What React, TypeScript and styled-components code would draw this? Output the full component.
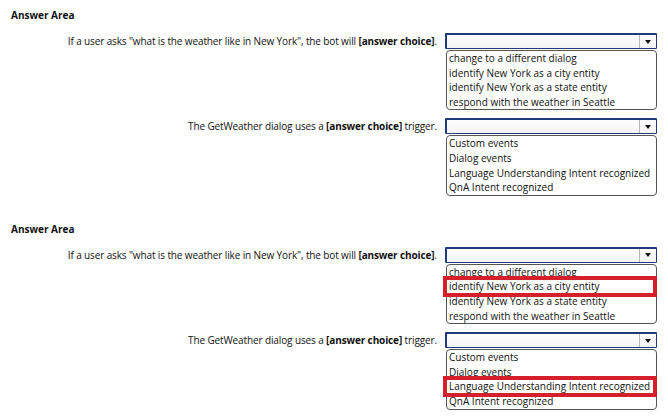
import React from "react";
import styled, { createGlobalStyle } from "styled-components";

const Global = createGlobalStyle`
  html, body { margin: 0; padding: 0; background: #ffffff; }
  body { font-family: "Open Sans", "Noto Sans", sans-serif; color: #111; }
`;

const Page = styled.div`
  width: 668px;
  height: 420px;
  padding: 8px 0 0 11px;
  box-sizing: border-box;
  overflow: hidden;
  display: flex;
  flex-direction: column;
`;

const Block = styled.section<{ $top?: number }>`
  display: flex;
  flex-direction: column;
  margin-top: ${(p) => p.$top ?? 0}px;
`;

const Heading = styled.div`
  font-weight: 700;
  font-size: 10px;
  line-height: 14px;
  margin-bottom: 11px;
`;

const Row = styled.div<{ $gap?: number }>`
  display: grid;
  grid-template-columns: 426px 212px;
  column-gap: 8px;
  align-items: start;
  margin-bottom: ${(p) => p.$gap ?? 0}px;
`;

const Label = styled.div`
  text-align: right;
  font-size: 10px;
  line-height: 16px;
  letter-spacing: -0.12px;
  white-space: nowrap;
  b { font-weight: 700; }
`;

const Drop = styled.div`
  display: flex;
  flex-direction: column;
`;

const Select = styled.div`
  height: 16px;
  box-sizing: border-box;
  border: 1px solid #203a78;
  border-left-width: 2px;
  border-top-width: 2px;
  border-radius: 1px;
  background: linear-gradient(#ffffff, #f3f3f3);
  display: flex;
  justify-content: flex-end;
`;

const Arrow = styled.div`
  width: 16px;
  border-left: 1px solid #b8b8b8;
  display: flex;
  align-items: center;
  justify-content: center;
  &::before {
    content: "";
    border-left: 3.5px solid transparent;
    border-right: 3.5px solid transparent;
    border-top: 4px solid #111;
  }
`;

const List = styled.ul`
  list-style: none;
  margin: 1px 0 0 1px;
  padding: 0 0 0 2px;
  border: 1px solid #555;
  border-radius: 4px;
  font-size: 10px;
  line-height: 14.6px;
`;

const Item = styled.li<{ $marked?: boolean }>`
  position: relative;
  white-space: nowrap;
  ${(p) =>
    p.$marked &&
    `
    &::after {
      content: "";
      position: absolute;
      top: -3px;
      bottom: -3px;
      left: -6px;
      right: -1px;
      border: 4.5px solid #d51f2b;
    }
  `}
`;

type Q = { before: string; after: string; options: string[] };

const questions: Q[] = [
  {
    before: 'If a user asks "what is the weather like in New York", the bot will ',
    after: ".",
    options: [
      "change to a different dialog",
      "identify New York as a city entity",
      "identify New York as a state entity",
      "respond with the weather in Seattle",
    ],
  },
  {
    before: "The GetWeather dialog uses a ",
    after: " trigger.",
    options: [
      "Custom events",
      "Dialog events",
      "Language Understanding Intent recognized",
      "QnA Intent recognized",
    ],
  },
];

const marks = [1, 2];

function Area({ showMarks, top }: { showMarks: boolean; top?: number }) {
  return (
    <Block $top={top}>
      <Heading>Answer Area</Heading>
      {questions.map((q, i) => (
        <Row key={i} $gap={i === 0 ? 8 : 0}>
          <Label>
            {q.before}
            <b>[answer choice]</b>
            {q.after}
          </Label>
          <Drop>
            <Select>
              <Arrow />
            </Select>
            <List>
              {q.options.map((o, j) => (
                <Item key={j} $marked={showMarks && marks[i] === j}>
                  {o}
                </Item>
              ))}
            </List>
          </Drop>
        </Row>
      ))}
    </Block>
  );
}

export default function App() {
  return (
    <>
      <Global />
      <Page>
        <Area showMarks={false} />
        <Area showMarks top={26} />
      </Page>
    </>
  );
}
